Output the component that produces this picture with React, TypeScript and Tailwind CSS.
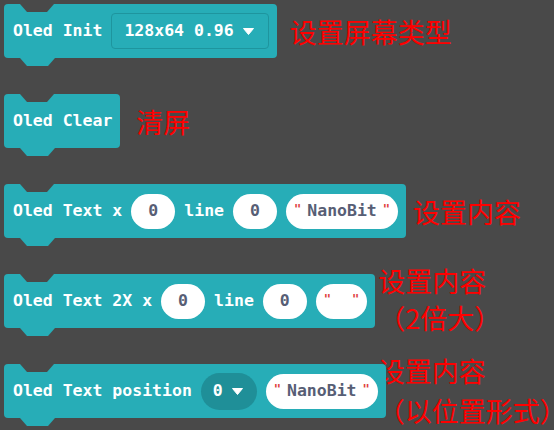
import React from "react";

const mono = "font-['DejaVu_Sans_Mono',monospace] font-bold text-[16.5px]";
const cjk = "font-['Noto_Sans_CJK_SC','Noto_Sans',sans-serif] text-[27px] text-[#ff0000] whitespace-nowrap";

const Arrow = () => (
  <svg width="11" height="7" viewBox="0 0 11 7" className="shrink-0">
    <path d="M0.5 0.5h10L5.5 6.5z" fill="#fff" stroke="#fff" strokeLinejoin="round" />
  </svg>
);

const Quote = () => (
  <span className="font-['DejaVu_Sans_Mono',monospace] text-[12px] leading-none text-[#e03c3c] self-start mt-[9px]">
    "
  </span>
);

const Num = ({ value }: { value: string }) => (
  <div className={`w-[44px] h-[35px] rounded-full bg-white flex items-center justify-center text-[#575e75] ${mono}`}>
    {value}
  </div>
);

const Str = ({ value }: { value: string }) => (
  <div className={`h-[35px] rounded-full bg-white flex items-center px-[8px] gap-[6px] text-[#575e75] ${mono}`}>
    <Quote />
    <span className={value ? "" : "w-[9px]"}>{value}</span>
    <Quote />
  </div>
);

const Block = ({ children }: { children: React.ReactNode }) => (
  <div className={`relative flex items-center h-[54px] shrink-0 bg-[#27adb7] rounded-[4px] pl-[9px] pr-[8px] gap-[9px] text-white ${mono}`}>
    <div className="absolute top-0 left-[16px] w-[34px] h-[8px] bg-[#494949] [clip-path:polygon(0_0,7px_100%,27px_100%,100%_0)]" />
    <div className="absolute top-full left-[16px] w-[35px] h-[8px] bg-[#27adb7] [clip-path:polygon(0_0,7px_100%,28px_100%,100%_0)]" />
    {children}
  </div>
);

export default function App() {
  return (
    <div className="w-[554px] h-[430px] bg-[#494949] overflow-hidden pt-[4px] pl-[4px] flex flex-col gap-[36px]">
      <div className="flex items-center h-[54px]">
        <Block>
          <span>Oled Init</span>
          <div className="h-[36px] flex items-center rounded-[4px] border border-[#1e959e] pl-[12px] pr-[14px] gap-[9px]">
            <span>128x64 0.96</span>
            <Arrow />
          </div>
        </Block>
        <div className={`${cjk} leading-[35px] ml-[13px]`}>设置屏幕类型</div>
      </div>

      <div className="flex items-center h-[54px]">
        <Block>
          <span>Oled Clear</span>
        </Block>
        <div className={`${cjk} leading-[35px] ml-[16px]`}>清屏</div>
      </div>

      <div className="flex items-center h-[54px]">
        <Block>
          <span>Oled Text x</span>
          <Num value="0" />
          <span>line</span>
          <Num value="0" />
          <Str value="NanoBit" />
        </Block>
        <div className={`${cjk} leading-[35px] ml-[7px]`}>设置内容</div>
      </div>

      <div className="flex items-center h-[54px]">
        <Block>
          <span>Oled Text 2X x</span>
          <Num value="0" />
          <span>line</span>
          <Num value="0" />
          <Str value="" />
        </Block>
        <div className={`${cjk} leading-[37px] ml-[3px] mb-[4px] flex flex-col`}>
          <span>设置内容</span>
          <span>（2倍大）</span>
        </div>
      </div>

      <div className="flex items-center h-[54px]">
        <Block>
          <span>Oled Text position</span>
          <div className="h-[37px] flex items-center rounded-full bg-[#1f8f98] pl-[12px] pr-[14px] gap-[9px]">
            <span>0</span>
            <Arrow />
          </div>
          <Str value="NanoBit" />
        </Block>
        <div className={`${cjk} leading-[40px] ml-[-8px] flex flex-col`}>
          <span>设置内容</span>
          <span>（以位置形式）</span>
        </div>
      </div>
    </div>
  );
}
